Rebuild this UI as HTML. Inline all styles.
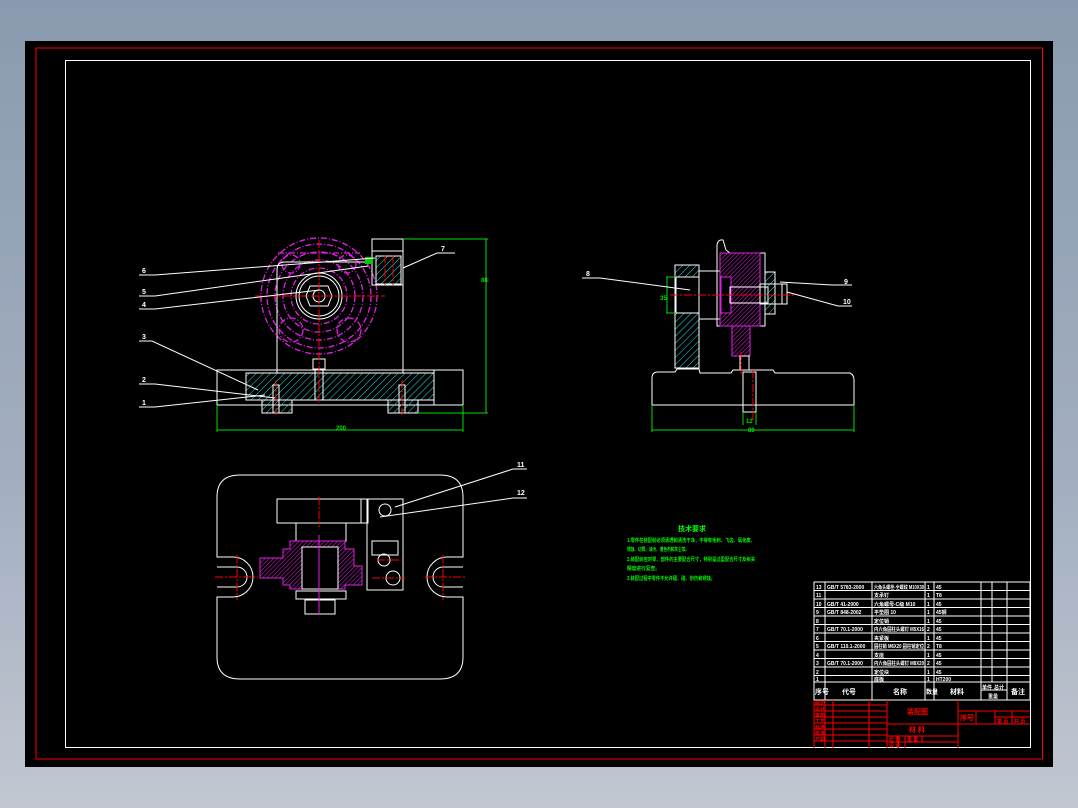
<!DOCTYPE html>
<html><head><meta charset="utf-8"><style>
html,body{margin:0;padding:0;width:1078px;height:808px;overflow:hidden;background:linear-gradient(#8a9aaf,#a3afc0 60%,#c2c7d1);}
svg{display:block}
text{font-family:"Liberation Sans","Noto Sans CJK SC",sans-serif;font-weight:bold}
</style></head><body>
<svg width="1078" height="808" viewBox="0 0 1078 808" xmlns="http://www.w3.org/2000/svg">
<defs>
<pattern id="hc" width="5" height="5" patternUnits="userSpaceOnUse" patternTransform="rotate(45)"><line x1="0" y1="0" x2="0" y2="5" stroke="#2ee0e0" stroke-width="1"/></pattern>
<pattern id="hm" width="3" height="3" patternUnits="userSpaceOnUse" patternTransform="rotate(45)"><line x1="0" y1="0" x2="0" y2="3" stroke="#e020e0" stroke-width="1"/></pattern>
</defs>
<rect x="25" y="41" width="1028" height="726" fill="#000"/>
<rect x="36" y="48" width="1006.5" height="711" fill="none" stroke="#f00" stroke-width="1"/>
<rect x="65.5" y="60.5" width="965" height="687" fill="none" stroke="#fff" stroke-width="1"/>

<!-- FRONT VIEW -->
<g fill="none" stroke="#fff" stroke-width="1">
<g stroke="#e020e0" stroke-width="1.3" stroke-dasharray="6,2,1,2">
<circle cx="319" cy="296" r="58"/><circle cx="319" cy="296" r="52"/><circle cx="319" cy="296" r="44"/><circle cx="319" cy="296" r="36"/><circle cx="319" cy="296" r="28"/>
<circle cx="291" cy="330" r="12"/><circle cx="349" cy="330" r="12"/><circle cx="291" cy="264" r="9"/><circle cx="347" cy="264" r="9"/>
<path d="M278 253 L360 253"/>
</g>
<path d="M277 373 V270 Q277 262 285 262 H372"/>
<rect x="372" y="239" width="31" height="46"/><line x1="372" y1="251" x2="403" y2="251"/>
<rect x="376" y="256" width="25" height="28" fill="url(#hc)"/>
<line x1="403" y1="239" x2="403" y2="373"/>
<circle cx="319" cy="296" r="23"/><circle cx="319" cy="296" r="20"/>
<path d="M310 286 h18 l4 10 -4 10 h-18 l-4 -10z"/><circle cx="319" cy="296" r="6"/>
<rect x="217" y="370" width="246" height="35"/>
<path d="M246 373 H434 V400 H246 Z" fill="url(#hc)"/>
<rect x="262" y="400" width="30" height="13" fill="url(#hc)"/>
<rect x="388" y="400" width="30" height="13" fill="url(#hc)"/>
<rect x="273" y="385" width="6" height="28"/><rect x="399" y="385" width="6" height="28"/>
<rect x="315" y="370" width="8" height="30"/><rect x="313" y="359" width="12" height="10"/>
<line x1="434" y1="370" x2="434" y2="405"/>
</g>
<g stroke="#f00" stroke-width="1" stroke-dasharray="8,2,2,2">
<line x1="319" y1="240" x2="319" y2="405"/><line x1="255" y1="296" x2="385" y2="296"/>
<line x1="276" y1="380" x2="276" y2="415"/><line x1="402" y1="380" x2="402" y2="415"/>
<line x1="385" y1="255" x2="385" y2="285"/><line x1="393" y1="255" x2="393" y2="285"/>
</g>
<rect x="365" y="257" width="8" height="7" fill="#0c0"/>
<g stroke="#0d0" stroke-width="1" fill="none">
<line x1="403" y1="239" x2="488" y2="239"/><line x1="418" y1="413" x2="488" y2="413"/>
<line x1="486" y1="239" x2="486" y2="413"/>
<line x1="217" y1="405" x2="217" y2="432"/><line x1="463" y1="405" x2="463" y2="432"/>
<line x1="217" y1="430" x2="463" y2="430"/>
</g>
<text x="481" y="282" fill="#0d0" font-size="6">88</text><text x="336" y="430" fill="#0d0" font-size="6">200</text>
<g stroke="#fff" stroke-width="1" fill="none">
<path d="M139 275 H155 L375 258"/><path d="M139 296 H155 L368 266"/><path d="M139 309 H155 L320 290"/>
<path d="M139 341 H152 L258 390"/><path d="M139 384 H155 L275 398"/><path d="M139 407 H155 L265 395"/>
<path d="M455 253 H437 L403 268"/>
</g>
<g fill="#fff" font-size="7"><text x="142" y="273">6</text><text x="142" y="294">5</text><text x="142" y="307">4</text><text x="142" y="339">3</text><text x="142" y="382">2</text><text x="142" y="405">1</text><text x="441" y="251">7</text></g>

<!-- SIDE VIEW -->
<g fill="none" stroke="#fff" stroke-width="1">
<path d="M652 405 V378 Q652 372 658 372 H675 L677 369 H699 L700 373 H731 L733 370 H773 L775 373 H850 Q854 375 854 380 V405 Z"/>
<line x1="652" y1="405" x2="854" y2="405"/>
<path d="M675 265 H699 V368 H675 Z" fill="url(#hc)"/>
<rect x="676" y="277" width="23" height="36" fill="#000"/>
<rect x="699" y="271" width="21" height="48"/>
<path d="M717 265 V245 Q718 239 723 240 L726 250 L730 253 H765 V326 H717 Z"/>
<path d="M720 253 H760 V326 H720 Z" fill="url(#hm)" stroke="#e020e0"/>
<rect x="732" y="326" width="18" height="30" fill="url(#hm)" stroke="#e020e0"/>
<rect x="721" y="277" width="10" height="36" fill="#000" stroke="#e020e0"/>
<rect x="730" y="287" width="38" height="16"/>
<rect x="765" y="272" width="10" height="42" fill="url(#hc)"/>
<rect x="760" y="284" width="22" height="20"/><rect x="775" y="284" width="12" height="20"/>
<rect x="740" y="356" width="9" height="14"/>
<rect x="743" y="372" width="13" height="40"/>
</g>
<g stroke="#f00" stroke-dasharray="8,2,2,2"><line x1="670" y1="295" x2="795" y2="295"/><line x1="753" y1="370" x2="753" y2="420"/><line x1="741" y1="352" x2="741" y2="375"/></g>
<g stroke="#0d0" fill="none">
<line x1="652" y1="405" x2="652" y2="432"/><line x1="854" y1="405" x2="854" y2="432"/><line x1="652" y1="430" x2="854" y2="430"/>
<line x1="666" y1="277" x2="676" y2="277"/><line x1="666" y1="313" x2="676" y2="313"/><line x1="667" y1="277" x2="667" y2="313"/>
<line x1="743" y1="412" x2="743" y2="425"/><line x1="756" y1="412" x2="756" y2="425"/>
</g>
<text x="660" y="300" fill="#0d0" font-size="6">35</text><text x="746" y="423" fill="#0d0" font-size="6">12</text><text x="748" y="432" fill="#0d0" font-size="6">80</text>
<g stroke="#fff" fill="none"><path d="M582 278 H600 L690 290"/><path d="M852 285 H832 L780 282"/><path d="M852 306 H838 L787 292"/></g>
<g fill="#fff" font-size="7"><text x="586" y="276">8</text><text x="844" y="284">9</text><text x="843" y="304">10</text></g>

<!-- PLAN VIEW -->
<g fill="none" stroke="#fff" stroke-width="1">
<path d="M240 475 H440 Q463 475 463 497 V557 H447 A20 20 0 0 0 447 597 H463 V657 Q463 679 440 679 H240 Q217 679 217 657 V597 H233 A20 20 0 0 0 233 557 H217 V497 Q217 475 240 475 Z"/>
<path d="M217 567 H237 A10 10 0 0 1 237 587 H217"/><path d="M463 567 H443 A10 10 0 0 0 443 587 H463"/>
<rect x="277" y="499" width="91" height="24"/><line x1="361" y1="499" x2="361" y2="523"/>
<rect x="367" y="499" width="36" height="91"/>
<rect x="372" y="541" width="26" height="14"/>
<circle cx="384" cy="560" r="6"/><circle cx="393" cy="578" r="7"/><circle cx="385" cy="510" r="6"/>
<rect x="296" y="523" width="50" height="18"/>
<path d="M290 541 H345 V549 H354 V566 H362 V585 H345 V589 H290 V585 H283 V578 H260 V558 H283 V549 H290 Z" fill="url(#hm)" stroke="#e020e0"/>
<rect x="302" y="547" width="36" height="42" fill="#000"/>
<rect x="296" y="591" width="50" height="8"/><rect x="305" y="600" width="30" height="14"/>
</g>
<g stroke="#f00" stroke-dasharray="8,2,2,2"><line x1="319" y1="497" x2="319" y2="527"/><line x1="237" y1="555" x2="237" y2="600"/><line x1="443" y1="555" x2="443" y2="600"/><line x1="215" y1="577" x2="258" y2="577"/><line x1="425" y1="577" x2="465" y2="577"/><line x1="377" y1="560" x2="405" y2="560"/><line x1="372" y1="578" x2="405" y2="578"/></g>
<line x1="319" y1="535" x2="319" y2="615" stroke="#e020e0"/>
<g stroke="#fff" fill="none"><path d="M527 469 H513 L395 507"/><path d="M527 498 H513 L380 517"/></g>
<g fill="#fff" font-size="7"><text x="517" y="467">11</text><text x="517" y="495">12</text></g>

<!-- TECH TEXT -->
<g fill="#0f0" font-size="5">
<text x="678" y="531" font-size="7">技术要求</text>
<text x="627" y="542" textLength="128" lengthAdjust="spacingAndGlyphs">1.零件在装配前必须清理和清洗干净，不得有毛刺、飞边、氧化皮、</text>
<text x="627" y="551" textLength="62" lengthAdjust="spacingAndGlyphs">锈蚀、切屑、油污、着色剂和灰尘等。</text>
<text x="627" y="561" textLength="128" lengthAdjust="spacingAndGlyphs">2.装配前应对零、部件的主要配合尺寸，特别是过盈配合尺寸及相关</text>
<text x="627" y="570" textLength="33" lengthAdjust="spacingAndGlyphs">精度进行复查。</text>
<text x="627" y="580" textLength="88" lengthAdjust="spacingAndGlyphs">3.装配过程中零件不允许磕、碰、划伤和锈蚀。</text>
</g>

<!-- TITLE BLOCK -->
<g stroke="#fff" stroke-width="1" fill="none">
<rect x="814" y="582" width="216" height="118"/>
<path d="M814 590.5H1030M814 599H1030M814 607.5H1030M814 616H1030M814 624.5H1030M814 633H1030M814 641.5H1030M814 650H1030M814 658.5H1030M814 667H1030M814 675.5H1030M814 682H1030"/>
<path d="M825 582V700M872 582V700M925 582V700M934 582V700M981 582V700M992 582V682M1007 582V700M992 690H1007M981 690H1007"/>
</g>
<g fill="#fff" font-size="5">
<text x="816" y="589">13</text><text x="827" y="589">GB/T 5783-2000</text><text x="874" y="589" textLength="50" lengthAdjust="spacingAndGlyphs">六角头螺栓-全螺纹 M10X30</text><text x="927" y="589">1</text><text x="936" y="589">45</text>
<text x="816" y="597">11</text><text x="874" y="597">支承钉</text><text x="927" y="597">1</text><text x="936" y="597">T8</text>
<text x="816" y="606">10</text><text x="827" y="606">GB/T 41-2000</text><text x="874" y="606">六角螺母-C级 M10</text><text x="927" y="606">1</text><text x="936" y="606">45</text>
<text x="816" y="614">9</text><text x="827" y="614">GB/T 848-2002</text><text x="874" y="614">平垫圈 10</text><text x="927" y="614">1</text><text x="936" y="614">45钢</text>
<text x="816" y="623">8</text><text x="874" y="623">定位销</text><text x="927" y="623">1</text><text x="936" y="623">45</text>
<text x="816" y="631">7</text><text x="827" y="631">GB/T 70.1-2000</text><text x="874" y="631" textLength="50" lengthAdjust="spacingAndGlyphs">内六角圆柱头螺钉 M5X16</text><text x="927" y="631">2</text><text x="936" y="631">45</text>
<text x="816" y="640">6</text><text x="874" y="640">夹紧板</text><text x="927" y="640">1</text><text x="936" y="640">45</text>
<text x="816" y="648">5</text><text x="827" y="648">GB/T 119.1-2000</text><text x="874" y="648" textLength="50" lengthAdjust="spacingAndGlyphs">圆柱销 M6X20 圆柱销定位</text><text x="927" y="648">2</text><text x="936" y="648">T8</text>
<text x="816" y="657">4</text><text x="874" y="657">支座</text><text x="927" y="657">1</text><text x="936" y="657">45</text>
<text x="816" y="665">3</text><text x="827" y="665">GB/T 70.1-2000</text><text x="874" y="665" textLength="50" lengthAdjust="spacingAndGlyphs">内六角圆柱头螺钉 M8X20</text><text x="927" y="665">2</text><text x="936" y="665">45</text>
<text x="816" y="674">2</text><text x="874" y="674">定位块</text><text x="927" y="674">1</text><text x="936" y="674">45</text>
<text x="816" y="681">1</text><text x="874" y="681">底板</text><text x="927" y="681">1</text><text x="936" y="681">HT200</text>
<text x="815" y="694" font-size="7">序号</text><text x="842" y="694" font-size="7">代号</text><text x="893" y="694" font-size="7">名称</text><text x="926" y="694" font-size="6">数量</text><text x="950" y="694" font-size="7">材料</text><text x="982" y="689">单件</text><text x="994" y="689">总计</text><text x="988" y="698">重量</text><text x="1011" y="694" font-size="7">备注</text>
</g>
<g stroke="#f00" stroke-width="1" fill="none">
<path d="M814 700V748M825 700V748M833 700V748M869 700V748M887 700V748M958 700V748M887 724H958M887 736H958M887 742H958M898 736V748M905 736V748M915 736V742M922 736V742"/>
<path d="M814 705H887M814 711H887M814 717H887M814 723H887M814 729H887M814 735H887M814 741H887"/>
<path d="M958 711H1030M958 724H1030M976 711V724M995 711V724M1012 711V724M995 717H1030"/>
</g>
<g fill="#f00" font-size="5">
<text x="907" y="714" font-size="7">装配图</text><text x="909" y="732" font-size="7">材 料</text>
<text x="960" y="720" font-size="7">序号</text><text x="997" y="723">第 页</text><text x="1014" y="723">共 页</text>
<text x="889" y="741">比 例</text><text x="907" y="741">重 量</text><text x="889" y="747">设 计</text>
<text x="815" y="705">标记</text><text x="815" y="711">设计</text><text x="815" y="717">审核</text><text x="815" y="723">工艺</text><text x="815" y="729">标准</text><text x="815" y="735">批准</text><text x="815" y="741">日期</text>
</g>
</svg>
</body></html>
